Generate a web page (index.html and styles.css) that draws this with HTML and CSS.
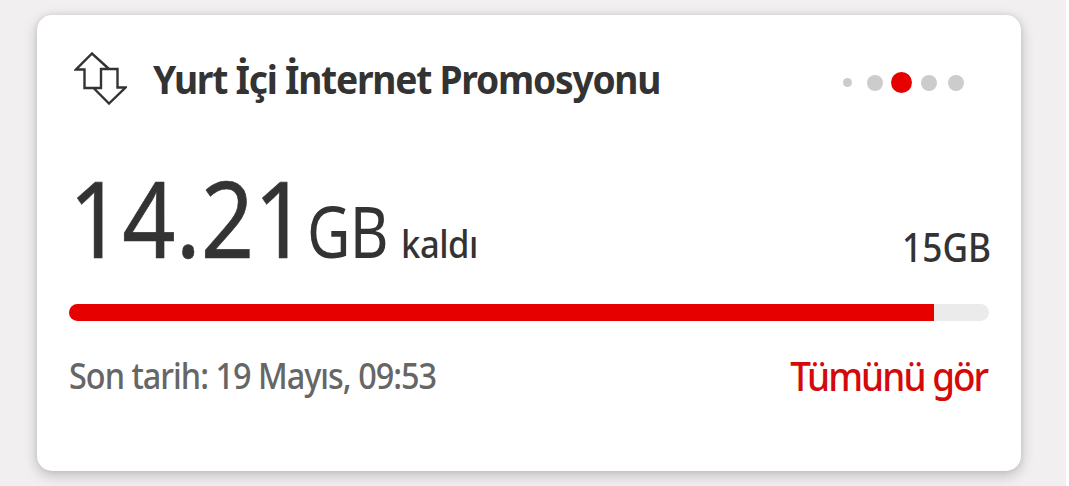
FILE: index.html
```html
<!DOCTYPE html>
<html lang="tr">
<head>
    <meta charset="UTF-8">
    <title>Yurt İçi İnternet Promosyonu</title>
    <link rel="stylesheet" href="styles.css">
</head>
<body>
    <div class="card">
        <div class="card-header">
            <svg class="icon" width="53" height="53" viewBox="0 0 53 53">
                <path d="M35 17 L18 1.5 L2 17.5 H10.5 V36 H27 V17 H43.5 V35.5 H51.5 L35 51.5 L19.5 36"/>
            </svg>
            <div class="title"><span>Yurt İçi İnternet Promosyonu</span></div>
            <div class="dots">
                <i class="dot small"></i>
                <i class="dot"></i>
                <i class="dot active"></i>
                <i class="dot"></i>
                <i class="dot"></i>
            </div>
        </div>
        <div class="usage">
            <div class="amount"><span>14.21</span></div>
            <div class="unit"><span>GB</span></div>
            <div class="left"><span>kaldı</span></div>
            <div class="total"><span>15GB</span></div>
        </div>
        <div class="bar">
            <div class="bar-fill" style="width: 94%"></div>
        </div>
        <div class="card-footer">
            <div class="date"><span>Son tarih: 19 Mayıs, 09:53</span></div>
            <a class="link"><span>Tümünü gör</span></a>
        </div>
    </div>
</body>
</html>
```
FILE: styles.css
```css
body {
    margin: 0;
    width: 1066px;
    height: 486px;
    overflow: hidden;
    display: flex;
    background-color: #f2eff0;
    font-family: "Noto Sans", sans-serif;
    color: #333;
}

html {
    background-color: #fff;
}

.card {
    box-sizing: border-box;
    width: 984px;
    height: 456px;
    margin: 15px 0 0 37px;
    padding: 37px 32px 0;
    background-color: #fff;
    border-radius: 15px;
    box-shadow: 0 4px 14px rgba(0, 0, 0, 0.22), 0 0 5px rgba(0, 0, 0, 0.08);
}

.card-header {
    display: flex;
    align-items: center;
    height: 53px;
    padding: 0 20px 0 5px;
}

.icon {
    fill: none;
    stroke: #333;
    stroke-width: 2.4;
}

/* narrow letters, the boxes keep the visible width */
.title, .amount, .unit, .left, .total, .date, .link {
    white-space: nowrap;
}

span {
    display: inline-block;
    transform-origin: left;
}

.title {
    width: 508px;
    margin-left: 26px;
    font-size: 40px;
    line-height: 40px;
    font-weight: 700;
    letter-spacing: -1.35px;
}

.title span {
    transform: scaleX(0.93);
}

.dots {
    display: flex;
    align-items: center;
    margin-left: auto;
    padding-top: 8px;
}

.dot {
    width: 16px;
    height: 16px;
    margin: 0 5.5px;
    border-radius: 50%;
    background-color: #ccc;
}

.dot.small {
    width: 9px;
    height: 9px;
    margin: 0 9px;
}

.dot.active {
    width: 21px;
    height: 21px;
    margin: 0 3px;
    background-color: #e60000;
}

.usage {
    display: flex;
    align-items: baseline;
    height: 106px;
    margin-top: 59px;
}

.amount {
    width: 238px;
    font-size: 106px;
    line-height: 106px;
}

.amount span {
    transform: scaleX(0.88);
    -webkit-text-stroke: 0.6px #333;
}

.unit {
    width: 94px;
    font-size: 72px;
    line-height: 72px;
    letter-spacing: -1px;
}

.unit span {
    transform: scaleX(0.83);
}

.left {
    width: 80px;
    font-size: 38px;
    line-height: 38px;
    font-weight: 500;
    letter-spacing: -0.5px;
}

.left span {
    transform: scaleX(0.91);
}

.total {
    align-self: flex-end;
    margin: 0 -2px 3px auto;
    font-size: 40px;
    line-height: 40px;
    font-weight: 500;
}

.total span {
    transform: scaleX(0.88);
    transform-origin: right;
}

.bar {
    height: 17px;
    margin-top: 34px;
    border-radius: 9px;
    background-color: #ebebeb;
    overflow: hidden;
}

.bar-fill {
    height: 100%;
    background-color: #e60000;
}

.card-footer {
    display: flex;
    justify-content: space-between;
    margin-top: 35px;
    line-height: 40px;
}

.date {
    font-size: 36px;
    font-weight: 500;
    color: #666;
    letter-spacing: -1.1px;
}

.date span {
    transform: scaleX(0.9);
}

.link {
    margin-right: 2px;
    font-size: 40px;
    font-weight: 500;
    color: #d40a0a;
    letter-spacing: -2.1px;
}

.link span {
    transform: scaleX(0.92);
    transform-origin: right;
}
```
